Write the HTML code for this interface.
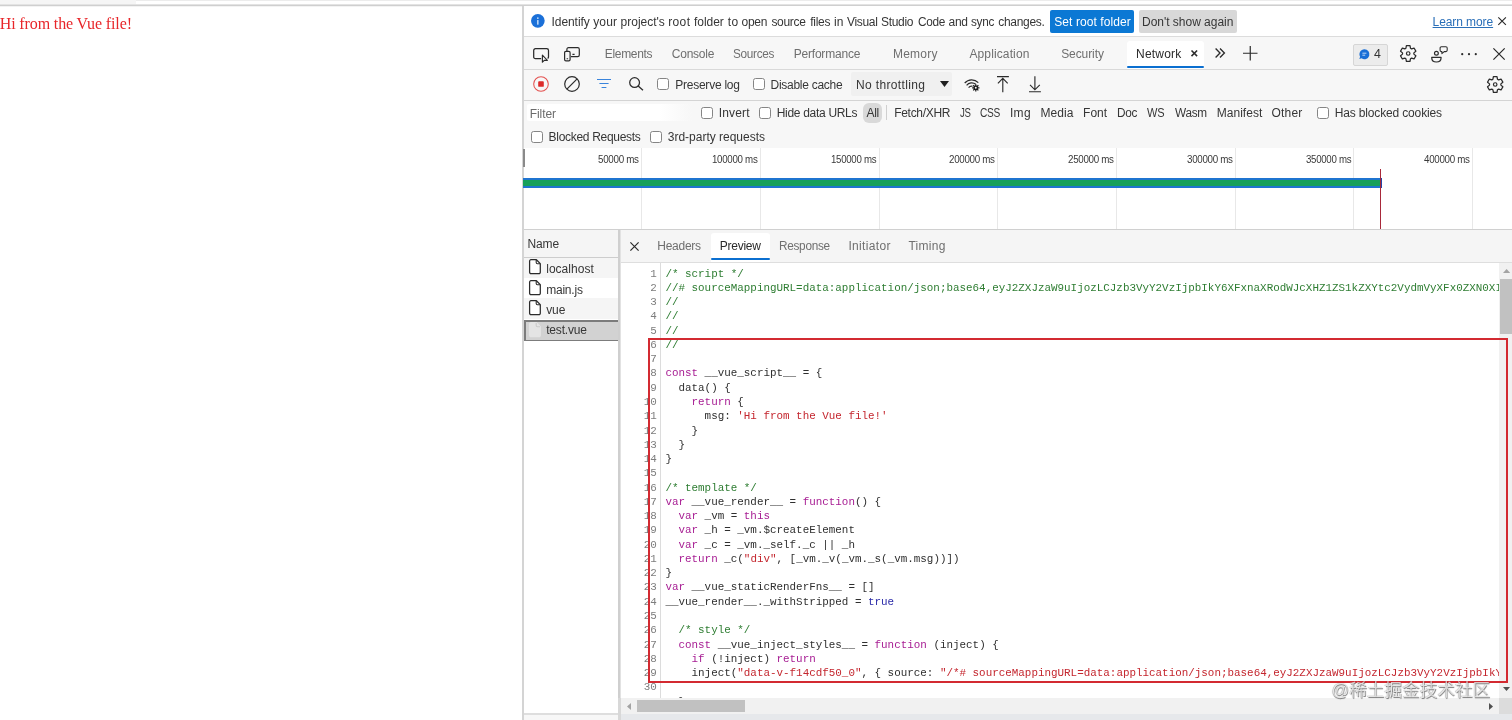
<!DOCTYPE html>
<html lang="en"><head><meta charset="utf-8"><title>Network preview</title>
<style>
html,body{margin:0;padding:0;background:#fff;}
body{width:1512px;height:720px;position:relative;overflow:hidden;font-family:"Liberation Sans",sans-serif;}
#root{position:absolute;left:0;top:0;width:1512px;height:720px;will-change:transform;}
.a{position:absolute;}
.t{position:absolute;white-space:pre;transform-origin:0 50%;}
.cb{position:absolute;width:10px;height:10px;border:1.15px solid #858585;border-radius:2.6px;background:#fff;}
svg{position:absolute;overflow:visible;}
.ln{position:absolute;left:0;width:1512px;white-space:pre;font:10.9px/14.286px "Liberation Mono",monospace;color:#2f2f2f;height:14.286px;}
.ln i{font-style:normal;position:absolute;right:855.2px;color:#7d7d7d;}
.ln b{font-weight:normal;position:absolute;left:665.4px;}
.k{color:#a71d93}.s{color:#c4262e}.c{color:#2e7d32}.n{color:#2a2aa8}.p{color:#2f2f2f}
</style></head>
<body>
<div id="root">
<div class="a" style="left:0px;top:0px;width:136px;height:4px;background:#f5f5f5"></div>
<div class="a" style="left:136px;top:0px;width:1376px;height:1px;background:#ececec"></div>
<div class="a" style="left:0px;top:4px;width:1512px;height:1px;background:#e3e3e3"></div>
<div class="a" style="left:0px;top:5px;width:1512px;height:1px;background:#cfcfcf"></div>
<div class="a" style="left:0px;top:6px;width:1512px;height:1px;background:#f3f3f3"></div>
<div class="a" style="left:522.4px;top:6px;width:989.6px;height:714px;background:#f7f7f7"></div>
<div class="a" style="left:522.4px;top:6px;width:1.2px;height:714px;background:#d4d4d4"></div>
<div class="a" style="left:523.6px;top:6px;width:988.4px;height:30px;background:#fff"></div>
<div class="a" style="left:523.6px;top:36px;width:988.4px;height:1px;background:#dcdcdc"></div>
<svg style="left:531px;top:14.3px" width="13.7" height="13.7" viewBox="0 0 14 14"><circle cx="7" cy="7" r="7" fill="#1b70d8"/><rect x="6.3" y="6.2" width="1.4" height="4.7" fill="#d4e7fb"/><circle cx="7" cy="4.3" r="0.85" fill="#d4e7fb"/></svg>
<div class="a" style="left:1050.3px;top:10px;width:83.7px;height:23.2px;background:#0b78d4;border-radius:2px"></div>
<div class="a" style="left:1138.6px;top:10px;width:98.6px;height:23.2px;background:#d8d8d8;border-radius:2px"></div>
<svg style="left:1497.8px;top:17.4px" width="8.2" height="8.2" viewBox="0 0 8 8"><path d="M0.3 0.3L7.7 7.7M7.7 0.3L0.3 7.7" stroke="#2b2b2b" stroke-width="1.1" fill="none"/></svg>
<div class="a" style="left:523.6px;top:69.3px;width:988.4px;height:1px;background:#d9d9d9"></div>
<div class="a" style="left:1126.8px;top:40.6px;width:77.2px;height:28.4px;background:#fff;border-radius:3px 3px 0 0"></div>
<div class="a" style="left:1126.8px;top:66px;width:77.2px;height:2.2px;background:#0b6fd0;border-radius:1px"></div>
<svg style="left:532.6px;top:47.6px" width="17" height="15" viewBox="0 0 17 15"><path d="M8.2 10.6H2.4A1.7 1.7 0 0 1 0.7 8.9V2.4A1.7 1.7 0 0 1 2.4 0.7H13.8A1.7 1.7 0 0 1 15.5 2.4V8.9A1.7 1.7 0 0 1 14.6 10.4" stroke="#2b2b2b" stroke-width="1.25" fill="none"/><path d="M9.4 7.2V14.2L11.3 12.3H14.4Z" stroke="#2b2b2b" stroke-width="1.15" fill="#f7f7f7" stroke-linejoin="round"/></svg>
<svg style="left:564.4px;top:47.3px" width="16" height="14.4" viewBox="0 0 16 14.4"><path d="M2.9 4V2.2A1.6 1.6 0 0 1 4.5 0.6H13.7A1.6 1.6 0 0 1 15.3 2.2V8.1A1.6 1.6 0 0 1 13.7 9.7H7" stroke="#2b2b2b" stroke-width="1.2" fill="none"/><rect x="0.6" y="4.4" width="5.5" height="9.4" rx="1.3" stroke="#2b2b2b" stroke-width="1.2" fill="#f7f7f7"/><path d="M2.6 11.7H4.1M8.4 7.4H10.6" stroke="#2b2b2b" stroke-width="1.1" fill="none"/></svg>
<svg style="left:1190.5px;top:49.7px" width="6.6" height="6.6" viewBox="0 0 6.6 6.6"><path d="M0.5 0.5L6.1 6.1M6.1 0.5L0.5 6.1" stroke="#2b2b2b" stroke-width="1.55" fill="none"/></svg>
<svg style="left:1214.6px;top:47.6px" width="10" height="10" viewBox="0 0 10 10"><path d="M0.6 0.6L5 5L0.6 9.4M5 0.6L9.4 5L5 9.4" stroke="#2b2b2b" stroke-width="1.35" fill="none"/></svg>
<svg style="left:1243.4px;top:45.5px" width="14.5" height="14.5" viewBox="0 0 14.5 14.5"><path d="M7.25 0V14.5M0 7.25H14.5" stroke="#2b2b2b" stroke-width="1.2" fill="none"/></svg>
<div class="a" style="left:1353px;top:43.7px;width:33px;height:20px;background:#ececec;border:1px solid #d6d6d6;border-radius:2px"></div>
<svg style="left:1359.4px;top:49.2px" width="10.4" height="10.4" viewBox="0 0 10.4 10.4"><path d="M5.4 0.2A5 5 0 1 1 2.6 9.3L0.3 10.1L1.1 7.7A5 5 0 0 1 5.4 0.2Z" fill="#1a6fd6"/><path d="M3.4 4.2H7.4M3.4 6.2H6.2" stroke="#cfe3fa" stroke-width="0.9"/></svg>
<svg style="left:1399.6px;top:45.2px" width="16.4" height="17" viewBox="0 0 16.4 17"><circle cx="8.2" cy="8.5" r="1.75" fill="none" stroke="#2b2b2b" stroke-width="1.2"/><path d="M10.52 3.29L10.00 0.71L6.40 0.71L5.88 3.29L4.85 3.89L2.35 3.04L0.55 6.16L2.53 7.90L2.53 9.10L0.55 10.84L2.35 13.96L4.85 13.11L5.88 13.71L6.40 16.29L10.00 16.29L10.52 13.71L11.55 13.11L14.05 13.96L15.85 10.84L13.87 9.10L13.87 7.90L15.85 6.16L14.05 3.04L11.55 3.89Z" fill="none" stroke="#2b2b2b" stroke-width="1.25" stroke-linejoin="round"/></svg>
<svg style="left:1431px;top:45.6px" width="17" height="17" viewBox="0 0 17 17"><circle cx="5.4" cy="7.3" r="1.9" fill="none" stroke="#2b2b2b" stroke-width="1.2"/><path d="M0.7 11.4H10.1C10.1 14.4 8 16 5.4 16C2.8 16 0.7 14.4 0.7 11.4Z" fill="none" stroke="#2b2b2b" stroke-width="1.2" stroke-linejoin="round"/><path d="M10.9 5.6H10.4A1.3 1.3 0 0 1 9.1 4.3V2A1.3 1.3 0 0 1 10.4 0.7H14.9A1.3 1.3 0 0 1 16.2 2V4.3A1.3 1.3 0 0 1 14.9 5.6H13.2L10.9 7.6Z" fill="none" stroke="#2b2b2b" stroke-width="1.05" stroke-linejoin="round"/></svg>
<svg style="left:1461.4px;top:52.6px" width="16" height="2.4" viewBox="0 0 16 2.4"><circle cx="1.2" cy="1.2" r="1.1" fill="#2b2b2b"/><circle cx="8" cy="1.2" r="1.1" fill="#2b2b2b"/><circle cx="14.8" cy="1.2" r="1.1" fill="#2b2b2b"/></svg>
<svg style="left:1492.9px;top:47.9px" width="12.1" height="12.1" viewBox="0 0 11.7 11.7"><path d="M0.4 0.4L11.3 11.3M11.3 0.4L0.4 11.3" stroke="#2b2b2b" stroke-width="1.2" fill="none"/></svg>
<div class="a" style="left:523.6px;top:100px;width:988.4px;height:1px;background:#d4d4d4"></div>
<svg style="left:532.8px;top:76px" width="16" height="16" viewBox="0 0 16 16"><circle cx="8" cy="8" r="7.3" fill="none" stroke="#e4514f" stroke-width="1.05"/><rect x="5.2" y="5.2" width="5.6" height="5.6" rx="0.9" fill="#dc2a2a"/></svg>
<svg style="left:564.2px;top:76px" width="16" height="16" viewBox="0 0 16 16"><circle cx="8" cy="8" r="7.3" fill="none" stroke="#2b2b2b" stroke-width="1.2"/><path d="M2.9 13.1L13.1 2.9" stroke="#2b2b2b" stroke-width="1.2"/></svg>
<svg style="left:597px;top:79px" width="14" height="9" viewBox="0 0 14 9"><path d="M0 0.5H14M2.4 4.5H11.6M4.6 8.5H9.4" stroke="#3a84dc" stroke-width="1"/></svg>
<svg style="left:628.6px;top:77.4px" width="14.6" height="13.6" viewBox="0 0 14.6 13.6"><circle cx="5.6" cy="5.6" r="4.9" fill="none" stroke="#2b2b2b" stroke-width="1.25"/><path d="M9.2 9L14 13.2" stroke="#2b2b2b" stroke-width="1.3"/></svg>
<div class="a" style="left:850.7px;top:72.2px;width:101.6px;height:23.6px;background:#f0f0f0;border-radius:2px"></div>
<svg style="left:940.4px;top:81.4px" width="9" height="6" viewBox="0 0 9 6"><path d="M0 0H9L4.5 6Z" fill="#1f1f1f"/></svg>
<svg style="left:964.4px;top:78px" width="16" height="14" viewBox="0 0 16 14"><path d="M0.7 5A9.4 9.4 0 0 1 14.3 4.6" fill="none" stroke="#2b2b2b" stroke-width="1.15"/><path d="M2.6 7.3A6.6 6.6 0 0 1 11.8 6.2" fill="none" stroke="#2b2b2b" stroke-width="1.15"/><path d="M4.6 9.6A3.8 3.8 0 0 1 8.6 8.2" fill="none" stroke="#2b2b2b" stroke-width="1.15"/><g transform="translate(8.1 6.2)"><path d="M4.36 1.29L4.28 -0.05L3.12 -0.05L3.04 1.29L2.54 1.50L1.53 0.61L0.71 1.43L1.60 2.44L1.39 2.94L0.05 3.02L0.05 4.18L1.39 4.26L1.60 4.76L0.71 5.77L1.53 6.59L2.54 5.70L3.04 5.91L3.12 7.25L4.28 7.25L4.36 5.91L4.86 5.70L5.87 6.59L6.69 5.77L5.80 4.76L6.01 4.26L7.35 4.18L7.35 3.02L6.01 2.94L5.80 2.44L6.69 1.43L5.87 0.61L4.86 1.50Z" fill="#1c1c1c"/><circle cx="3.7" cy="3.6" r="0.95" fill="#f7f7f7"/></g></svg>
<svg style="left:996.7px;top:75.6px" width="12" height="16.4" viewBox="0 0 12 16.4"><path d="M0 0.6H11.9M5.8 2.4V16.2M0.9 7.4L5.8 2.4L10.7 7.4" fill="none" stroke="#2b2b2b" stroke-width="1.15"/></svg>
<svg style="left:1028.8px;top:75.6px" width="12" height="16.4" viewBox="0 0 12 16.4"><path d="M0 15.8H11.9M5.9 0.3V13.8M1 8.9L5.9 13.8L10.8 8.9" fill="none" stroke="#2b2b2b" stroke-width="1.15"/></svg>
<svg style="left:1486.7px;top:75.5px" width="16.4" height="17" viewBox="0 0 16.4 17"><circle cx="8.2" cy="8.5" r="1.75" fill="none" stroke="#2b2b2b" stroke-width="1.2"/><path d="M10.52 3.29L10.00 0.71L6.40 0.71L5.88 3.29L4.85 3.89L2.35 3.04L0.55 6.16L2.53 7.90L2.53 9.10L0.55 10.84L2.35 13.96L4.85 13.11L5.88 13.71L6.40 16.29L10.00 16.29L10.52 13.71L11.55 13.11L14.05 13.96L15.85 10.84L13.87 9.10L13.87 7.90L15.85 6.16L14.05 3.04L11.55 3.89Z" fill="none" stroke="#2b2b2b" stroke-width="1.25" stroke-linejoin="round"/></svg>
<div class="cb" style="left:657.4px;top:78.4px"></div>
<div class="cb" style="left:752.8px;top:78.4px"></div>
<div class="cb" style="left:701.1px;top:106.9px"></div>
<div class="cb" style="left:759.1px;top:106.9px"></div>
<div class="cb" style="left:1317px;top:106.9px"></div>
<div class="cb" style="left:530.7px;top:130.7px"></div>
<div class="cb" style="left:650.3px;top:130.7px"></div>
<div class="a" style="left:527px;top:103.6px;width:165px;height:17.2px;background:linear-gradient(90deg,#fff 0,#fff 80%,#f7f7f7 100%);border-radius:2px 0 0 2px"></div>
<div class="a" style="left:863px;top:103.4px;width:18.6px;height:19.2px;background:#d9d9d9;border-radius:6px"></div>
<div class="a" style="left:886.4px;top:104.8px;width:1px;height:15px;background:#cfcfcf"></div>
<div class="a" style="left:523.6px;top:147.6px;width:988.4px;height:1px;background:#d9d9d9"></div>
<div class="a" style="left:523.6px;top:148.4px;width:988.4px;height:81px;background:#fff"></div>
<div class="a" style="left:522.8px;top:149.4px;width:2px;height:17.6px;background:#8a8a8a"></div>
<div class="a" style="left:640.9px;top:148.4px;width:1px;height:81px;background:#e8e8e8"></div>
<div class="a" style="left:760px;top:148.4px;width:1px;height:81px;background:#e8e8e8"></div>
<div class="a" style="left:878.7px;top:148.4px;width:1px;height:81px;background:#e8e8e8"></div>
<div class="a" style="left:997.3px;top:148.4px;width:1px;height:81px;background:#e8e8e8"></div>
<div class="a" style="left:1116px;top:148.4px;width:1px;height:81px;background:#e8e8e8"></div>
<div class="a" style="left:1234.7px;top:148.4px;width:1px;height:81px;background:#e8e8e8"></div>
<div class="a" style="left:1353.4px;top:148.4px;width:1px;height:81px;background:#e8e8e8"></div>
<div class="a" style="left:1472px;top:148.4px;width:1px;height:81px;background:#e8e8e8"></div>
<div class="a" style="left:522.6px;top:178px;width:859.8px;height:10px;background:#1f74d0"></div>
<div class="a" style="left:522.6px;top:179.8px;width:857.4px;height:6.3px;background:#17a05a"></div>
<div class="a" style="left:1380px;top:178px;width:2.4px;height:10px;background:#2446a8"></div>
<div class="a" style="left:1379.6px;top:169.2px;width:1.4px;height:60px;background:#a8283a"></div>
<div class="a" style="left:523.6px;top:229.2px;width:988.4px;height:1.1px;background:#d0d0d0"></div>
<div class="a" style="left:523.6px;top:230.3px;width:94.6px;height:490px;background:#fff"></div>
<div class="a" style="left:523.6px;top:230.3px;width:94.6px;height:26.4px;background:#f5f5f5"></div>
<div class="a" style="left:523.6px;top:256.6px;width:94.6px;height:1px;background:#cdcdcd"></div>
<div class="a" style="left:523.6px;top:257.6px;width:94.6px;height:20.8px;background:#f5f5f5"></div>
<div class="a" style="left:523.6px;top:297.8px;width:94.6px;height:21.2px;background:#f5f5f5"></div>
<div class="a" style="left:523.6px;top:320px;width:94.6px;height:20.8px;background:#d2d2d2;box-sizing:border-box;border-style:solid;border-color:#7c7c7c;border-width:2.2px 0 1.6px 2.4px"></div>
<div class="a" style="left:618.2px;top:230.3px;width:3px;height:490px;background:#e2e2e2"></div>
<div class="a" style="left:618.2px;top:230.3px;width:1.4px;height:490px;background:#cfcfcf"></div>
<svg style="left:529.4px;top:259.2px" width="12" height="15.4" viewBox="0 0 12 15.4"><path d="M2 0.7H7.4L11.3 4.6V13.3A1.4 1.4 0 0 1 9.9 14.7H2A1.4 1.4 0 0 1 0.6 13.3V2.1A1.4 1.4 0 0 1 2 0.7Z" fill="#fff" stroke="#2b2b2b" stroke-width="1.25" stroke-linejoin="round"/><path d="M7.2 0.9V3.5A1.2 1.2 0 0 0 8.4 4.7H11" fill="none" stroke="#2b2b2b" stroke-width="1.1"/></svg>
<svg style="left:529.4px;top:279.7px" width="12" height="15.4" viewBox="0 0 12 15.4"><path d="M2 0.7H7.4L11.3 4.6V13.3A1.4 1.4 0 0 1 9.9 14.7H2A1.4 1.4 0 0 1 0.6 13.3V2.1A1.4 1.4 0 0 1 2 0.7Z" fill="#fff" stroke="#2b2b2b" stroke-width="1.25" stroke-linejoin="round"/><path d="M7.2 0.9V3.5A1.2 1.2 0 0 0 8.4 4.7H11" fill="none" stroke="#2b2b2b" stroke-width="1.1"/></svg>
<svg style="left:529.4px;top:300.3px" width="12" height="15.4" viewBox="0 0 12 15.4"><path d="M2 0.7H7.4L11.3 4.6V13.3A1.4 1.4 0 0 1 9.9 14.7H2A1.4 1.4 0 0 1 0.6 13.3V2.1A1.4 1.4 0 0 1 2 0.7Z" fill="#fff" stroke="#2b2b2b" stroke-width="1.25" stroke-linejoin="round"/><path d="M7.2 0.9V3.5A1.2 1.2 0 0 0 8.4 4.7H11" fill="none" stroke="#2b2b2b" stroke-width="1.1"/></svg>
<svg style="left:529.4px;top:321.9px" width="12" height="15.4" viewBox="0 0 12 15.4"><path d="M2 0.7H7.4L11.3 4.6V13.3A1.4 1.4 0 0 1 9.9 14.7H2A1.4 1.4 0 0 1 0.6 13.3V2.1A1.4 1.4 0 0 1 2 0.7Z" fill="#e4e4e4" stroke="#e4e4e4" stroke-width="1.25" stroke-linejoin="round"/><path d="M7.2 0.9V3.5A1.2 1.2 0 0 0 8.4 4.7H11" fill="none" stroke="#cacaca" stroke-width="1.1"/></svg>
<div class="a" style="left:621.2px;top:230.3px;width:890.8px;height:32.2px;background:#f5f5f5"></div>
<div class="a" style="left:621.2px;top:262.2px;width:890.8px;height:1px;background:#dedede"></div>
<div class="a" style="left:621.2px;top:263px;width:877.6px;height:435.4px;background:#fff"></div>
<div class="a" style="left:710.9px;top:233.3px;width:59.2px;height:29px;background:#fff;border-radius:3px 3px 0 0"></div>
<div class="a" style="left:710.9px;top:257.8px;width:59.2px;height:2.4px;background:#0b6fd0;border-radius:1px"></div>
<svg style="left:630.2px;top:241.8px" width="9" height="9" viewBox="0 0 9 9"><path d="M0.4 0.4L8.6 8.6M8.6 0.4L0.4 8.6" stroke="#2b2b2b" stroke-width="1.2" fill="none"/></svg>
<div class="a" style="left:660px;top:263px;width:1px;height:435.4px;background:#dcdcdc"></div>
<div class="a" style="left:0;top:263px;width:1498.6px;height:435.4px;overflow:hidden">
<div class="ln" style="top:3.55px"><i>1</i><b><span class="c">/* script */</span></b></div>
<div class="ln" style="top:17.82px"><i>2</i><b><span class="c">//# sourceMappingURL=data:</span><span class="c">application/json;</span><span class="c">base64,eyJ2ZXJzaW9uIjozLCJzb3VyY2VzIjpbIkY6XFxnaXRodWJcXHZ1ZS1kZXYtc2VydmVyXFx0ZXN0XIZ1ZQ</span></b></div>
<div class="ln" style="top:32.09px"><i>3</i><b><span class="c">//</span></b></div>
<div class="ln" style="top:46.36px"><i>4</i><b><span class="c">//</span></b></div>
<div class="ln" style="top:60.62px"><i>5</i><b><span class="c">//</span></b></div>
<div class="ln" style="top:74.89px"><i>6</i><b><span class="c">//</span></b></div>
<div class="ln" style="top:89.16px"><i>7</i><b></b></div>
<div class="ln" style="top:103.43px"><i>8</i><b><span class="k">const</span><span class="p"> __vue_script__ = {</span></b></div>
<div class="ln" style="top:117.70px"><i>9</i><b><span class="p">  data() {</span></b></div>
<div class="ln" style="top:131.96px"><i>10</i><b><span class="p">    </span><span class="k">return</span><span class="p"> {</span></b></div>
<div class="ln" style="top:146.23px"><i>11</i><b><span class="p">      msg: </span><span class="s">'Hi from the Vue file!'</span></b></div>
<div class="ln" style="top:160.50px"><i>12</i><b><span class="p">    }</span></b></div>
<div class="ln" style="top:174.77px"><i>13</i><b><span class="p">  }</span></b></div>
<div class="ln" style="top:189.04px"><i>14</i><b><span class="p">}</span></b></div>
<div class="ln" style="top:203.30px"><i>15</i><b></b></div>
<div class="ln" style="top:217.57px"><i>16</i><b><span class="c">/* template */</span></b></div>
<div class="ln" style="top:231.84px"><i>17</i><b><span class="k">var</span><span class="p"> __vue_render__ = </span><span class="k">function</span><span class="p">() {</span></b></div>
<div class="ln" style="top:246.11px"><i>18</i><b><span class="p">  </span><span class="k">var</span><span class="p"> _vm = </span><span class="k">this</span></b></div>
<div class="ln" style="top:260.38px"><i>19</i><b><span class="p">  </span><span class="k">var</span><span class="p"> _h = _vm.$createElement</span></b></div>
<div class="ln" style="top:274.64px"><i>20</i><b><span class="p">  </span><span class="k">var</span><span class="p"> _c = _vm._self._c || _h</span></b></div>
<div class="ln" style="top:288.91px"><i>21</i><b><span class="p">  </span><span class="k">return</span><span class="p"> _c(</span><span class="s">"div"</span><span class="p">, [_vm._v(_vm._s(_vm.msg))])</span></b></div>
<div class="ln" style="top:303.18px"><i>22</i><b><span class="p">}</span></b></div>
<div class="ln" style="top:317.45px"><i>23</i><b><span class="k">var</span><span class="p"> __vue_staticRenderFns__ = []</span></b></div>
<div class="ln" style="top:331.72px"><i>24</i><b><span class="p">__vue_render__._withStripped = </span><span class="n">true</span></b></div>
<div class="ln" style="top:345.98px"><i>25</i><b></b></div>
<div class="ln" style="top:360.25px"><i>26</i><b><span class="p">  </span><span class="c">/* style */</span></b></div>
<div class="ln" style="top:374.52px"><i>27</i><b><span class="p">  </span><span class="k">const</span><span class="p"> __vue_inject_styles__ = </span><span class="k">function</span><span class="p"> (inject) {</span></b></div>
<div class="ln" style="top:388.79px"><i>28</i><b><span class="p">    </span><span class="k">if</span><span class="p"> (!inject) </span><span class="k">return</span></b></div>
<div class="ln" style="top:403.06px"><i>29</i><b><span class="p">    inject(</span><span class="s">"data-v-f14cdf50_0"</span><span class="p">, { source: </span><span class="s">"/*# sourceMappingURL=data:</span><span class="s">application/json;</span><span class="s">base64,eyJ2ZXJzaW9uIjozLCJzb3VyY2VzIjpbIkY6XFxn</span></b></div>
<div class="ln" style="top:417.32px"><i>30</i><b></b></div>
<div class="ln" style="top:431.59px"><i>31</i><b><span class="p">  }</span></b></div>
</div>
<div class="a" style="left:1498.8px;top:263px;width:13.2px;height:435.4px;background:#f1f1f1"></div>
<div class="a" style="left:1500.2px;top:278.6px;width:11.8px;height:55.2px;background:#c1c1c1"></div>
<svg style="left:1503.2px;top:268.8px" width="7.2" height="4" viewBox="0 0 7.2 4"><path d="M0 4L3.6 0L7.2 4Z" fill="#a3a3a3"/></svg>
<svg style="left:1503.4px;top:686.8px" width="7" height="4" viewBox="0 0 7 4"><path d="M0 0H7L3.5 4Z" fill="#505050"/></svg>
<div class="a" style="left:621.2px;top:698.4px;width:877.6px;height:15.4px;background:#f1f1f1"></div>
<div class="a" style="left:637.3px;top:699.6px;width:107.8px;height:12.8px;background:#c1c1c1"></div>
<svg style="left:627px;top:702.8px" width="4" height="7" viewBox="0 0 4 7"><path d="M4 0L0 3.5L4 7Z" fill="#a3a3a3"/></svg>
<svg style="left:1488.6px;top:702.6px" width="4" height="7" viewBox="0 0 4 7"><path d="M0 0L4 3.5L0 7Z" fill="#505050"/></svg>
<div class="a" style="left:1498.8px;top:698.4px;width:13.2px;height:15.4px;background:#dcdcdc"></div>
<div class="a" style="left:523.6px;top:713.2px;width:94.6px;height:1.8px;background:#dedede"></div>
<div class="a" style="left:523.6px;top:715px;width:94.6px;height:5px;background:#f7f7f7"></div>
<div class="a" style="left:620.8px;top:713.9px;width:891.2px;height:6.1px;background:#e6e8eb"></div>
<div class="a" style="left:618.2px;top:698px;width:2.6px;height:22px;background:#d8d8d8"></div>
<div class="a" style="left:648px;top:338px;width:860px;height:345px;border:2px solid #d32a31;box-sizing:border-box"></div>
<span class="t" style="left:1331.4px;top:677.8px;font:17.5px/24px 'Liberation Sans','Noto Sans CJK SC',sans-serif;color:rgba(255,255,255,0.72);text-shadow:0.7px 0.7px 0.7px rgba(30,30,30,0.55),-0.4px -0.4px 0.8px rgba(30,30,30,0.38);letter-spacing:0.12px">@稀土掘金技术社区</span>
<span class="t" style="left:-0.3px;top:13.0px;font:16px/22px 'Liberation Serif', serif;color:#e8262a;letter-spacing:-0.120px;">Hi from the Vue file!</span>
<span class="t" style="left:551.5px;top:13.7px;font:12px/17px 'Liberation Sans', sans-serif;color:#363636;letter-spacing:-0.058px;">Identify</span>
<span class="t" style="left:593.2px;top:13.7px;font:12px/17px 'Liberation Sans', sans-serif;color:#363636;letter-spacing:0.152px;">your</span>
<span class="t" style="left:620.6px;top:13.7px;font:12px/17px 'Liberation Sans', sans-serif;color:#363636;letter-spacing:-0.014px;">project's</span>
<span class="t" style="left:668.2px;top:13.7px;font:12px/17px 'Liberation Sans', sans-serif;color:#363636;letter-spacing:0.371px;">root</span>
<span class="t" style="left:694.0px;top:13.7px;font:12px/17px 'Liberation Sans', sans-serif;color:#363636;letter-spacing:-0.046px;">folder</span>
<span class="t" style="left:727.7px;top:13.7px;font:12px/17px 'Liberation Sans', sans-serif;color:#363636;letter-spacing:0.500px;">to</span>
<span class="t" style="left:741.6px;top:13.7px;font:12px/17px 'Liberation Sans', sans-serif;color:#363636;letter-spacing:-0.300px;">open</span>
<span class="t" style="left:771.4px;top:13.7px;font:12px/17px 'Liberation Sans', sans-serif;color:#363636;letter-spacing:-0.300px;">source</span>
<span class="t" style="left:810.3px;top:13.7px;font:12px/17px 'Liberation Sans', sans-serif;color:#363636;letter-spacing:-0.286px;">files</span>
<span class="t" style="left:834.1px;top:13.7px;font:12px/17px 'Liberation Sans', sans-serif;color:#363636;letter-spacing:0.056px;">in</span>
<span class="t" style="left:846.9px;top:13.7px;font:12px/17px 'Liberation Sans', sans-serif;color:#363636;letter-spacing:-0.300px;">Visual</span>
<span class="t" style="left:881.0px;top:13.7px;font:12px/17px 'Liberation Sans', sans-serif;color:#363636;letter-spacing:-0.300px;">Studio</span>
<span class="t" style="left:917.7px;top:13.7px;font:12px/17px 'Liberation Sans', sans-serif;color:#363636;letter-spacing:-0.300px;transform:scaleX(0.9861);">Code</span>
<span class="t" style="left:948.6px;top:13.7px;font:12px/17px 'Liberation Sans', sans-serif;color:#363636;letter-spacing:-0.300px;">and</span>
<span class="t" style="left:971.4px;top:13.7px;font:12px/17px 'Liberation Sans', sans-serif;color:#363636;letter-spacing:-0.300px;transform:scaleX(0.9795);">sync</span>
<span class="t" style="left:998.2px;top:13.7px;font:12px/17px 'Liberation Sans', sans-serif;color:#363636;letter-spacing:-0.300px;">changes.</span>
<span class="t" style="left:1054.3px;top:13.7px;font:12px/17px 'Liberation Sans', sans-serif;color:#ffffff;letter-spacing:0.073px;">Set root folder</span>
<span class="t" style="left:1142.0px;top:13.7px;font:12px/17px 'Liberation Sans', sans-serif;color:#363636;letter-spacing:-0.019px;">Don't show again</span>
<span class="t" style="left:1432.6px;top:13.7px;font:12px/17px 'Liberation Sans', sans-serif;color:#2a6fb8;letter-spacing:-0.086px;text-decoration:underline;text-underline-offset:1px;">Learn more</span>
<span class="t" style="left:604.7px;top:45.7px;font:12px/17px 'Liberation Sans', sans-serif;color:#6f6f6f;letter-spacing:-0.300px;">Elements</span>
<span class="t" style="left:671.8px;top:45.7px;font:12px/17px 'Liberation Sans', sans-serif;color:#6f6f6f;letter-spacing:-0.239px;">Console</span>
<span class="t" style="left:733.3px;top:45.7px;font:12px/17px 'Liberation Sans', sans-serif;color:#6f6f6f;letter-spacing:-0.300px;transform:scaleX(0.9827);">Sources</span>
<span class="t" style="left:793.7px;top:45.7px;font:12px/17px 'Liberation Sans', sans-serif;color:#6f6f6f;letter-spacing:-0.200px;">Performance</span>
<span class="t" style="left:892.9px;top:45.7px;font:12px/17px 'Liberation Sans', sans-serif;color:#6f6f6f;letter-spacing:0.251px;">Memory</span>
<span class="t" style="left:969.4px;top:45.7px;font:12px/17px 'Liberation Sans', sans-serif;color:#6f6f6f;letter-spacing:0.128px;">Application</span>
<span class="t" style="left:1061.2px;top:45.7px;font:12px/17px 'Liberation Sans', sans-serif;color:#6f6f6f;letter-spacing:-0.094px;">Security</span>
<span class="t" style="left:1136.0px;top:45.7px;font:12px/17px 'Liberation Sans', sans-serif;color:#2a2a2a;letter-spacing:0.214px;">Network</span>
<span class="t" style="left:1373.7px;top:45.7px;font:12px/17px 'Liberation Sans', sans-serif;color:#333;letter-spacing:0.000px;transform:scaleX(1.0318);">4</span>
<span class="t" style="left:675.2px;top:76.7px;font:12px/17px 'Liberation Sans', sans-serif;color:#363636;letter-spacing:-0.234px;">Preserve log</span>
<span class="t" style="left:770.6px;top:76.7px;font:12px/17px 'Liberation Sans', sans-serif;color:#363636;letter-spacing:-0.281px;">Disable cache</span>
<span class="t" style="left:856.1px;top:76.7px;font:12px/17px 'Liberation Sans', sans-serif;color:#363636;letter-spacing:0.341px;">No throttling</span>
<span class="t" style="left:529.7px;top:105.7px;font:12px/17px 'Liberation Sans', sans-serif;color:#6b6b6b;letter-spacing:-0.054px;">Filter</span>
<span class="t" style="left:718.8px;top:104.7px;font:12px/17px 'Liberation Sans', sans-serif;color:#363636;letter-spacing:0.157px;">Invert</span>
<span class="t" style="left:776.7px;top:104.7px;font:12px/17px 'Liberation Sans', sans-serif;color:#363636;letter-spacing:-0.300px;">Hide data URLs</span>
<span class="t" style="left:866.4px;top:104.7px;font:12px/17px 'Liberation Sans', sans-serif;color:#363636;letter-spacing:-0.222px;">All</span>
<span class="t" style="left:894.2px;top:104.7px;font:12px/17px 'Liberation Sans', sans-serif;color:#363636;letter-spacing:-0.300px;">Fetch/XHR</span>
<span class="t" style="left:959.6px;top:104.7px;font:12px/17px 'Liberation Sans', sans-serif;color:#363636;letter-spacing:-0.300px;transform:scaleX(0.8020);">JS</span>
<span class="t" style="left:979.9px;top:104.7px;font:12px/17px 'Liberation Sans', sans-serif;color:#363636;letter-spacing:-0.300px;transform:scaleX(0.8469);">CSS</span>
<span class="t" style="left:1009.9px;top:104.7px;font:12px/17px 'Liberation Sans', sans-serif;color:#363636;letter-spacing:0.342px;">Img</span>
<span class="t" style="left:1040.5px;top:104.7px;font:12px/17px 'Liberation Sans', sans-serif;color:#363636;letter-spacing:0.053px;">Media</span>
<span class="t" style="left:1083.1px;top:104.7px;font:12px/17px 'Liberation Sans', sans-serif;color:#363636;letter-spacing:-0.005px;">Font</span>
<span class="t" style="left:1116.9px;top:104.7px;font:12px/17px 'Liberation Sans', sans-serif;color:#363636;letter-spacing:-0.300px;transform:scaleX(0.9834);">Doc</span>
<span class="t" style="left:1147.2px;top:104.7px;font:12px/17px 'Liberation Sans', sans-serif;color:#363636;letter-spacing:-0.300px;transform:scaleX(0.9189);">WS</span>
<span class="t" style="left:1174.6px;top:104.7px;font:12px/17px 'Liberation Sans', sans-serif;color:#363636;letter-spacing:-0.300px;transform:scaleX(0.9828);">Wasm</span>
<span class="t" style="left:1216.7px;top:104.7px;font:12px/17px 'Liberation Sans', sans-serif;color:#363636;letter-spacing:0.034px;">Manifest</span>
<span class="t" style="left:1271.5px;top:104.7px;font:12px/17px 'Liberation Sans', sans-serif;color:#363636;letter-spacing:0.196px;">Other</span>
<span class="t" style="left:1334.8px;top:104.7px;font:12px/17px 'Liberation Sans', sans-serif;color:#363636;letter-spacing:-0.159px;">Has blocked cookies</span>
<span class="t" style="left:548.6px;top:128.7px;font:12px/17px 'Liberation Sans', sans-serif;color:#363636;letter-spacing:-0.300px;">Blocked Requests</span>
<span class="t" style="left:667.8px;top:128.7px;font:12px/17px 'Liberation Sans', sans-serif;color:#363636;letter-spacing:-0.011px;">3rd-party requests</span>
<span class="t" style="left:598.4px;top:152.9px;font:10px/14px 'Liberation Sans', sans-serif;color:#3a3a3a;letter-spacing:-0.300px;transform:scaleX(0.9803);">50000 ms</span>
<span class="t" style="left:712.3px;top:152.9px;font:10px/14px 'Liberation Sans', sans-serif;color:#3a3a3a;letter-spacing:-0.300px;transform:scaleX(0.9727);">100000 ms</span>
<span class="t" style="left:831.4px;top:152.9px;font:10px/14px 'Liberation Sans', sans-serif;color:#3a3a3a;letter-spacing:-0.300px;transform:scaleX(0.9664);">150000 ms</span>
<span class="t" style="left:949.4px;top:152.9px;font:10px/14px 'Liberation Sans', sans-serif;color:#3a3a3a;letter-spacing:-0.300px;transform:scaleX(0.9770);">200000 ms</span>
<span class="t" style="left:1068.4px;top:152.9px;font:10px/14px 'Liberation Sans', sans-serif;color:#3a3a3a;letter-spacing:-0.300px;transform:scaleX(0.9770);">250000 ms</span>
<span class="t" style="left:1187.4px;top:152.9px;font:10px/14px 'Liberation Sans', sans-serif;color:#3a3a3a;letter-spacing:-0.300px;transform:scaleX(0.9770);">300000 ms</span>
<span class="t" style="left:1306.4px;top:152.9px;font:10px/14px 'Liberation Sans', sans-serif;color:#3a3a3a;letter-spacing:-0.300px;transform:scaleX(0.9664);">350000 ms</span>
<span class="t" style="left:1424.4px;top:152.9px;font:10px/14px 'Liberation Sans', sans-serif;color:#3a3a3a;letter-spacing:-0.300px;transform:scaleX(0.9770);">400000 ms</span>
<span class="t" style="left:527.4px;top:235.7px;font:12px/17px 'Liberation Sans', sans-serif;color:#363636;letter-spacing:-0.105px;">Name</span>
<span class="t" style="left:546.2px;top:260.7px;font:12px/17px 'Liberation Sans', sans-serif;color:#363636;letter-spacing:0.028px;">localhost</span>
<span class="t" style="left:546.2px;top:281.7px;font:12px/17px 'Liberation Sans', sans-serif;color:#363636;letter-spacing:-0.219px;">main.js</span>
<span class="t" style="left:546.2px;top:301.7px;font:12px/17px 'Liberation Sans', sans-serif;color:#363636;letter-spacing:-0.080px;">vue</span>
<span class="t" style="left:546.2px;top:321.7px;font:12px/17px 'Liberation Sans', sans-serif;color:#363636;letter-spacing:-0.190px;">test.vue</span>
<span class="t" style="left:657.3px;top:237.7px;font:12px/17px 'Liberation Sans', sans-serif;color:#6f6f6f;letter-spacing:-0.277px;">Headers</span>
<span class="t" style="left:719.8px;top:237.7px;font:12px/17px 'Liberation Sans', sans-serif;color:#2a2a2a;letter-spacing:-0.265px;">Preview</span>
<span class="t" style="left:779.3px;top:237.7px;font:12px/17px 'Liberation Sans', sans-serif;color:#6f6f6f;letter-spacing:-0.300px;transform:scaleX(0.9837);">Response</span>
<span class="t" style="left:848.4px;top:237.7px;font:12px/17px 'Liberation Sans', sans-serif;color:#6f6f6f;letter-spacing:0.330px;">Initiator</span>
<span class="t" style="left:908.4px;top:237.7px;font:12px/17px 'Liberation Sans', sans-serif;color:#6f6f6f;letter-spacing:0.287px;">Timing</span>
</div>
</body></html>
